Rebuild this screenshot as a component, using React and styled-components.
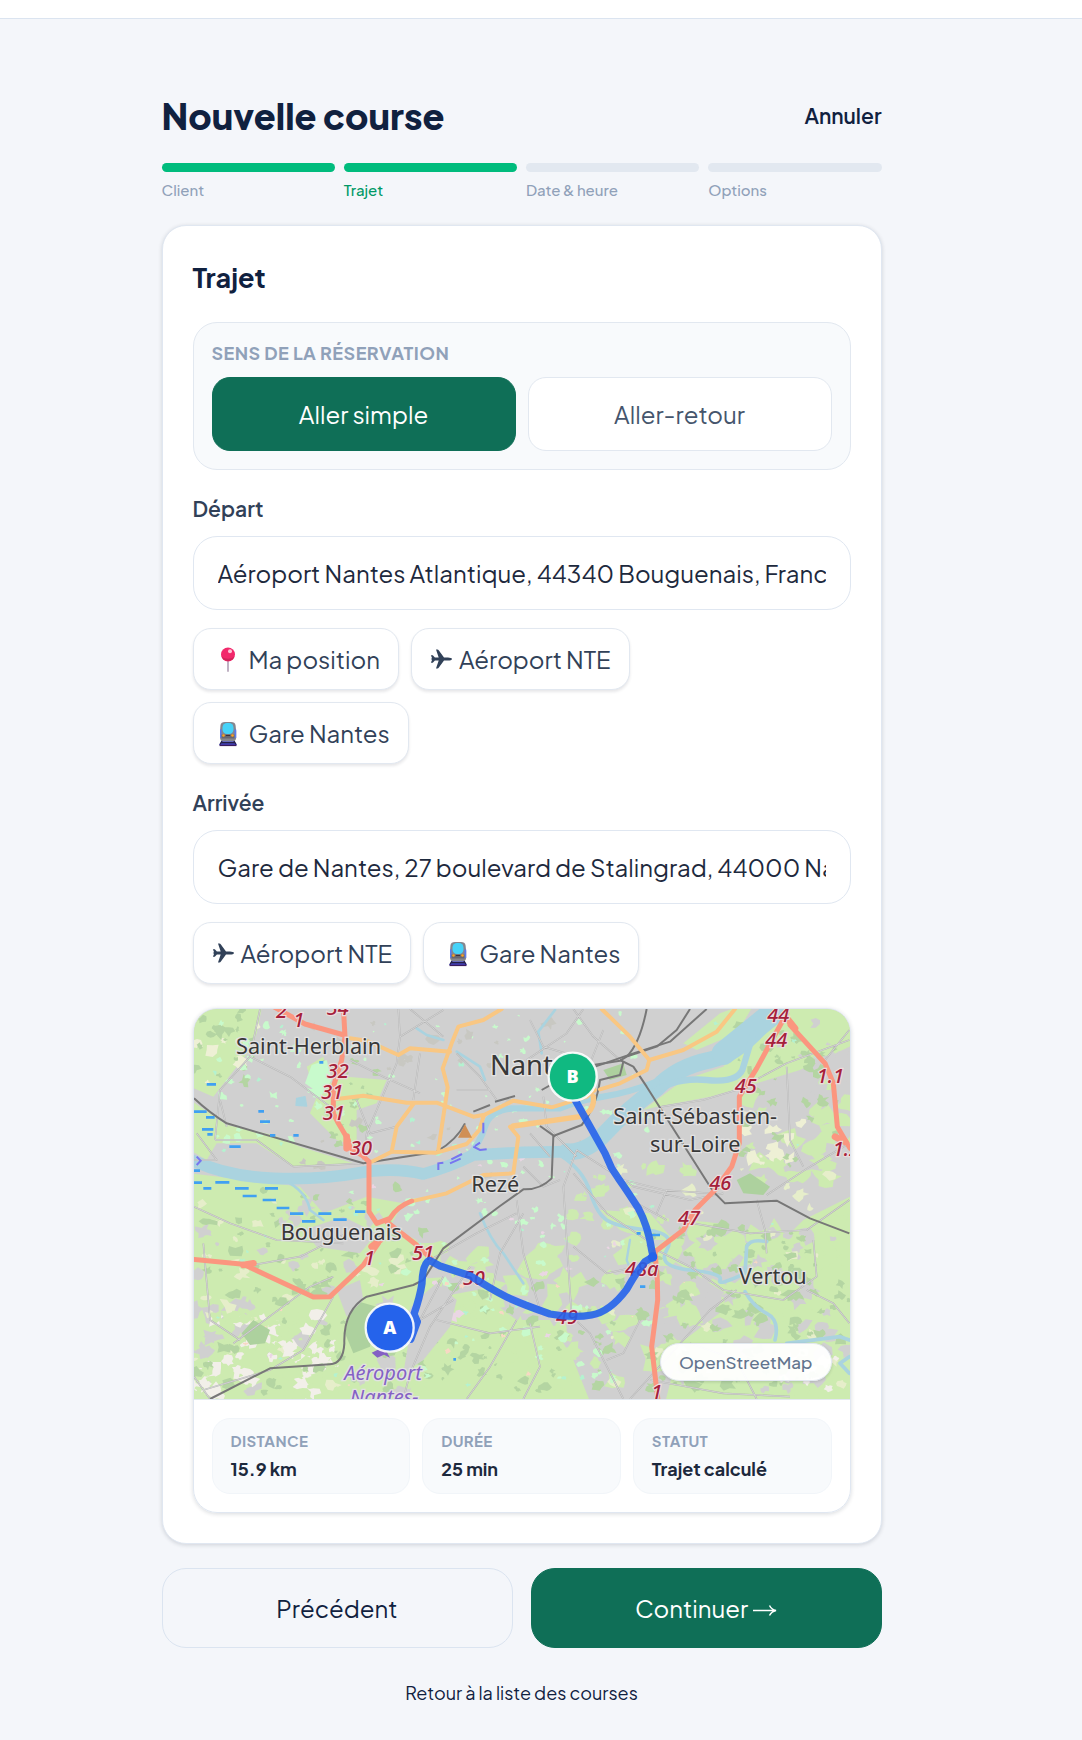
import { useState } from "react";
import styled, { createGlobalStyle, css } from "styled-components";

const steps = [
  { label: "Client", done: true },
  { label: "Trajet", done: true, current: true },
  { label: "Date & heure" },
  { label: "Options" },
];

const stats = [
  { label: "Distance", value: "15.9 km" },
  { label: "Durée", value: "25 min" },
  { label: "Statut", value: "Trajet calculé" },
];

const App = () => {
  const [sens, setSens] = useState("simple");
  const [depart, setDepart] = useState(
    "Aéroport Nantes Atlantique, 44340 Bouguenais, France"
  );
  const [arrivee, setArrivee] = useState(
    "Gare de Nantes, 27 boulevard de Stalingrad, 44000 Nantes, France"
  );

  return (
    <>
      <GlobalStyle />
      <TopBar />
      <Page>
        <Container>
          <TitleRow>
            <Title>Nouvelle course</Title>
            <CancelLink href="#annuler">Annuler</CancelLink>
          </TitleRow>

          <Steps>
            {steps.map(s => (
              <Step key={s.label} $done={s.done} $current={s.current}>
                {s.label}
              </Step>
            ))}
          </Steps>

          <Card>
            <CardTitle>Trajet</CardTitle>

            <SensBox role="group" aria-labelledby="sens">
              <SensLabel id="sens">Sens de la réservation</SensLabel>
              <SensGrid>
                <SensButton
                  type="button"
                  $active={sens === "simple"}
                  onClick={() => setSens("simple")}
                >
                  Aller simple
                </SensButton>
                <SensButton
                  type="button"
                  $active={sens === "retour"}
                  onClick={() => setSens("retour")}
                >
                  Aller-retour
                </SensButton>
              </SensGrid>
            </SensBox>

            <Field>
              <Label htmlFor="depart">Départ</Label>
              <Input
                id="depart"
                value={depart}
                onChange={e => setDepart(e.target.value)}
              />
              <Chips>
                <Chip type="button">
                  <PinIcon />
                  Ma position
                </Chip>
                <Chip type="button">
                  <PlaneIcon />
                  Aéroport NTE
                </Chip>
                <Chip type="button">
                  <TrainIcon />
                  Gare Nantes
                </Chip>
              </Chips>
            </Field>

            <Field>
              <Label htmlFor="arrivee">Arrivée</Label>
              <Input
                id="arrivee"
                value={arrivee}
                onChange={e => setArrivee(e.target.value)}
              />
              <Chips>
                <Chip type="button">
                  <PlaneIcon />
                  Aéroport NTE
                </Chip>
                <Chip type="button">
                  <TrainIcon />
                  Gare Nantes
                </Chip>
              </Chips>
            </Field>

            <MapCard>
              <MapView>
                <RouteMap />
                <MapCredit href="#osm">OpenStreetMap</MapCredit>
              </MapView>
              <Stats>
                {stats.map(s => (
                  <Stat key={s.label}>
                    <dt>{s.label}</dt>
                    <dd>{s.value}</dd>
                  </Stat>
                ))}
              </Stats>
            </MapCard>
          </Card>

          <Actions>
            <ActionButton type="button">Précédent</ActionButton>
            <ActionButton type="button" $primary>
              Continuer <Arrow />
            </ActionButton>
          </Actions>
          <BackLink href="#courses">Retour à la liste des courses</BackLink>
        </Container>
      </Page>
    </>
  );
};

export default App;

const PinIcon = () => (
  <ChipIcon viewBox="0 0 32 28" aria-hidden="true">
    <path d="M16 14v12" stroke="#b9a9bd" strokeWidth="1.8" strokeLinecap="round" />
    <circle cx="16" cy="9.500" r="7" fill="#f2286b" />
    <path d="M9.500 11.500a7 7 0 0 0 13 0c-4 3-9 3-13 0z" fill="#cf2459" />
    <circle cx="18" cy="6.300" r="2" fill="#ffc2d6" />
  </ChipIcon>
);

const TrainIcon = () => (
  <ChipIcon viewBox="0 -1 32 28" aria-hidden="true">
    <path d="M10 20.500h12l3 4.500H7z" fill="#4a55f0" />
    <path d="M8.500 5Q9 2 13 2h6q4 0 4.500 3l.7 6v7q0 2-2.500 3.500H10.300Q8 20 8 18v-7z" fill="#85868e" />
    <path d="M8 9.500h1.500v8L8 18zM22.500 9.500h1.700v8.500l-1.700-.5z" fill="#5b7df0" />
    <rect x="10.500" y="3" width="11" height="11" rx="4.500" fill="#45d3f8" />
    <path d="M9.500 14.500h13v4h-13z" fill="#68666e" />
    <circle cx="11.500" cy="15.500" r="1.300" fill="#ffa41b" />
    <circle cx="20.500" cy="15.500" r="1.300" fill="#ffa41b" />
    <path d="M14 15.500h4" stroke="#3a3440" />
    <path d="M10 21l-2 3.500M22 21l2 3.500M9 22.700h14" stroke="#262046" strokeWidth="1.400" />
    <path d="M7.500 25.300h17" stroke="#3a1c5c" strokeWidth="1.600" />
  </ChipIcon>
);

const PlaneIcon = () => (
  <PlaneSvg viewBox="0 0 22 20" aria-hidden="true">
    <path
      d="M21.500 10Q21 11.500 17.500 11.500H13.500L8.400 18.600Q7.800 19.500 6.800 19.500H5.500L8.200 11.500H4.400L2.300 13.800H.4L1.600 10.800 .2 10 1.600 9.200 .4 6.200H2.300L4.400 8.500H8.200L5.500 .5H6.800Q7.800 .5 8.400 1.400L13.500 8.500H17.500Q21 8.500 21.500 10Z"
      fill="currentColor"
    />
  </PlaneSvg>
);

const Arrow = () => (
  <ArrowIcon viewBox="0 0 24 14" aria-hidden="true">
    <path d="M0 7.500h22M16.500 2.500Q18.500 6.500 23 7.500 18.500 8.500 16.500 12.500" fill="none" stroke="currentColor" strokeWidth="1.500" />
  </ArrowIcon>
);

/* small land-use patches, spread with a seeded generator */
const patches = (seed, count, [x, y, w, h], size) => {
  let n = seed * 7919;
  const rnd = () => {
    n = (n * 16807) % 2147483647;
    return n / 2147483647;
  };
  let d = "";
  for (let i = 0; i < count; i++) {
    const cx = x + rnd() * w;
    const cy = y + rnd() * h;
    const sides = 8 + Math.floor(rnd() * 6);
    const r = size * (0.3 + rnd());
    for (let k = 0; k < sides; k++) {
      const a = (k / sides) * Math.PI * 2;
      const rr = r * (0.35 + rnd() * 0.85);
      d += `${k ? "L" : "M"}${Math.round(cx + Math.cos(a) * rr * 1.2)} ${Math.round(cy + Math.sin(a) * rr)}`;
    }
    d += "Z";
  }
  return d;
};

const land = [
  ["#cdebb0", patches(11, 80, [560, 740, 760, 460], 38)],
  ["#cdebb0", patches(12, 80, [1400, 660, 580, 540], 42)],
  ["#cdebb0", patches(13, 20, [1680, 250, 300, 330], 30)],
  ["#cdebb0", patches(31, 26, [1120, 480, 400, 300], 22)],
  ["#d0d0d0", patches(14, 44, [12, 620, 620, 560], 26)],
  ["#d0d0d0", patches(32, 40, [1420, 700, 560, 480], 28)],
  ["#d0d0d0", patches(15, 10, [1720, 60, 260, 220], 22)],
  ["#e6eeca", patches(16, 36, [12, 600, 620, 560], 18)],
  ["#eef0d5", patches(33, 8, [12, 40, 200, 240], 18)],
  ["#e6eeca", patches(17, 30, [1250, 500, 720, 680], 17)],
  ["#eef0d5", patches(34, 12, [1660, 340, 180, 180], 22)],
  ["#f2efe9", patches(18, 40, [12, 940, 440, 250], 22)],
  ["#f2efe9", patches(35, 10, [1740, 1020, 230, 170], 18)],
  ["#cdebb0", patches(36, 60, [12, 940, 460, 250], 18)],
  ["#b4d5a2", patches(19, 90, [12, 560, 700, 630], 17)],
  ["#b4d5a2", patches(20, 100, [1380, 680, 600, 510], 18)],
  ["#b4d5a2", patches(21, 50, [700, 820, 660, 370], 16)],
  ["#b4d5a2", patches(22, 36, [1640, 60, 330, 440], 15)],
  ["#b4d5a2", patches(23, 20, [12, 30, 180, 220], 17)],
  ["#b4d5a2", patches(37, 16, [400, 180, 160, 260], 11)],
  ["#c8facc", patches(24, 80, [480, 40, 900, 640], 9)],
  ["#c8facc", patches(25, 50, [640, 600, 760, 560], 13)],
  ["#c8facc", patches(26, 30, [60, 60, 400, 360], 12)],
  ["#b4f2d0", patches(38, 50, [12, 60, 1900, 1100], 7)],
  ["#ead6e4", patches(28, 16, [40, 380, 1300, 700], 14)],
  ["#f8d8c4", patches(39, 20, [60, 740, 1700, 420], 7)],
  ["#c8c8c2", patches(29, 24, [250, 60, 1100, 500], 16)],
];

const minorRoads =
  "M210 27L180 170 90 270 75 420M180 170L240 200 300 230 420 320M75 420L200 420 310 500 520 490M110 380L90 300" +
  "M625 27L630 110 620 190 560 330 530 400 520 480M660 27L760 110M480 180L580 230 690 280M630 110L760 30" +
  "M800 160L870 230 920 300M500 300L540 400 620 380M690 160L670 300M800 270H900M12 480L80 480 20 400" +
  "M1020 60L1060 140 1160 170M1150 27L1210 110 1290 180M1010 180L1130 100 1180 27M1240 90L1180 240" +
  "M1060 290L1070 380 1160 470M1160 450L1300 540 1420 570 1560 580M1160 450L1120 560 1130 720 1145 950" +
  "M1240 500L1330 560 1500 600 1600 580M1150 520L1250 640 1370 720M1430 570L1400 640M1020 400L1080 470" +
  "M1415 320L1540 300 1640 270 1790 190 1978 120M1905 180L1978 90M1790 200L1800 420 1840 500M1730 585L1860 500 1978 430" +
  "M1510 670L1680 700 1850 690 1978 600M1700 600L1725 690 1730 760M1370 735L1500 800 1600 870 1780 900 1880 830 1870 720" +
  "M1640 870L1560 930 1480 1020 1320 1197M1850 870L1930 910 1978 970M1145 950L1200 1000 1300 1197" +
  "M1000 500L1060 560 1110 540M1000 640L930 760 900 900M840 800L720 980 660 1120 640 1197M980 600L1000 760 1050 930" +
  "M760 830L690 960 790 900M740 960L900 1000 1050 980M720 780L860 700 980 640M1150 740L1250 820 1390 790" +
  "M12 620L120 670 260 720 460 730M40 730L60 960 150 1020M160 800L330 770 470 700M130 1030L360 860 430 830" +
  "M430 890L340 1050 240 1110 40 1170M12 1130L60 1197M980 960L900 1100 830 1197M1020 970L1050 1100 1000 1197" +
  "M1350 960L1300 1060 1250 1080M1380 1140L1600 1180 1800 1190M1500 1030L1640 1080 1700 1197M1340 610L1430 660";

const towns = [
  ["Saint-Herblain", 138, 161, 65],
  ["Nantes", 900, 226, 82],
  ["Rezé", 844, 576, 65],
  ["Saint-Sébastien-", 1270, 371, 65],
  ["sur-Loire", 1380, 455, 65],
  ["Bouguenais", 272, 719, 65],
  ["Vertou", 1646, 851, 65],
];

const exits = [
  ["2", 258, 54],
  ["1", 310, 80],
  ["34", 410, 46],
  ["32", 410, 233],
  ["31", 394, 298],
  ["31", 398, 361],
  ["30", 480, 465],
  ["1", 522, 795],
  ["51", 666, 781],
  ["50", 818, 854],
  ["49", 1098, 972],
  ["48a", 1305, 827],
  ["47", 1464, 675],
  ["46", 1558, 569],
  ["45", 1634, 280],
  ["44", 1726, 141],
  ["44", 1732, 67],
  ["1.1", 1880, 248],
  ["1.2", 1928, 467],
  ["1", 1384, 1197],
];

const RouteMap = () => (
  <MapSvg
    viewBox="12 27 1968 1170"
    preserveAspectRatio="xMidYMid slice"
    role="img"
    aria-label="Itinéraire de l'aéroport à la gare de Nantes"
  >
    <defs>
      <filter id="soft" x="0" y="0" width="1" height="1">
        <feGaussianBlur stdDeviation="2" />
      </filter>
    </defs>
    <rect width="2000" height="1200" fill="#d0d0d0" />
    <g filter="url(#soft)">
      <rect width="2000" height="1230" fill="#d0d0d0" />
      <g fill="#cdebb0">
        <path d="M0 0H220L200 100 180 150 140 200 70 290 0 260Z" />
        <path d="M0 300L110 375 250 405 330 440 490 490 310 500 200 430 80 430 50 480 0 450Z" />
        <path d="M0 520L250 550 330 560 400 640 530 590 640 610 600 680 680 720 720 790 690 880 640 960 560 1080 640 1230H0Z" />
        <path d="M350 200L400 170 420 250 470 230 590 240 560 310 500 330 500 440 440 420 360 340 380 290Z" />
        <path d="M1360 330L1480 240 1600 200 1690 90 1740 0H2000V130L1830 210 1700 250 1560 290 1400 320Z" />
        <path d="M1480 130L1590 40 1700 0 1640 100 1520 150Z" />
        <path d="M1430 770L1620 860 1700 800 1840 660 2000 580V1230H1420L1470 1030 1640 900Z" />
        <path d="M700 900L860 870 980 960 1080 960 1150 1080 1210 1230H640L700 1060Z" />
        <path d="M1230 630L1380 640 1450 720 1380 720 1290 690Z" />
      </g>
      {land.map(([fill, d], i) => (
        <path key={i} d={d} fill={fill} />
      ))}
      <g fill="#add19e">
        <path d="M490 900L560 920 540 1040 490 1060 465 1000Z" />
        <path d="M155 1000L190 960 240 990 225 1030 180 1035Z" />
        <path d="M1640 540L1680 520 1740 560 1720 585 1660 580Z" />
        <path d="M1240 210L1300 190 1310 225 1260 240Z" />
      </g>
      <path d="M365 195L410 180 425 240 395 285 345 250Z" fill="#c8facc" />
      <g fill="#d0d0d0">
        <path d="M440 870L510 840 520 900 470 950Z" />
        <path d="M680 900L740 850 800 900 780 980 700 1080 640 1120 660 1000Z" />
        <path d="M340 690L460 650 560 700 510 760 380 740Z" />
      </g>

      <g fill="none" stroke="#aad3df" strokeLinecap="round" strokeLinejoin="round">
        <path d="M0 478Q110 530 250 535T500 520 700 522Q780 500 850 465L1000 457 1150 455" strokeWidth="35" />
        <path d="M1130 455Q1190 460 1250 395T1400 265Q1460 200 1560 180T1760 20" strokeWidth="50" />
        <path d="M1600 160L1760 30" strokeWidth="70" />
        <path d="M830 475Q870 430 885 380T970 325L1110 325Q1170 300 1240 290T1400 245" strokeWidth="19" />
        <path d="M1380 285Q1450 230 1550 240T1660 200L1690 100" strokeWidth="19" />
        <path d="M1110 465Q1180 510 1200 575T1250 660 1370 690 1430 750 1500 810 1590 840 1665 820L1670 740Q1680 715 1730 725" strokeWidth="11" />
        <path d="M1665 875Q1690 920 1730 940T1755 1020M1790 1030L1950 1010 1978 1020M1978 1070L1950 1090 1978 1120" strokeWidth="11" />
        <path d="M680 85L710 105 760 120M800 155L870 200 885 240M1095 30L1045 95 1055 160M300 550Q350 580 360 630L400 660M870 640Q900 720 940 760L1000 850" strokeWidth="8" />
        <path d="M1320 720L1310 780 1330 830" strokeWidth="7" />
        <path d="M320 295L345 290 350 318 318 316Z" fill="#aad3df" strokeWidth="4" />
      </g>

      <path d={minorRoads} fill="none" stroke="#b2b2b2" strokeWidth="5" strokeLinejoin="round" />
      <path d={minorRoads} fill="none" stroke="#e2e2e2" strokeWidth="2" strokeLinejoin="round" />

      <g fill="none" stroke="#777" strokeWidth="6" strokeLinejoin="round">
        <path d="M12 295Q60 340 110 370L520 490 740 455Q800 420 825 370" />
        <path d="M850 335L900 315M915 305L975 288M1055 270L1100 245M1200 205L1330 160 1440 125 1550 27" />
        <path d="M1210 195L1290 182 1310 170 1400 140 1460 90 1500 27M1310 170Q1350 130 1370 27" />
        <path d="M1290 180L1330 200 1370 260 1570 575 1605 610 1760 602 1860 655 1978 700" />
        <path d="M1300 185L1290 225 1230 240Q1220 320 1175 375L1090 408 1085 535Q1050 570 1000 568L930 618 760 745 700 840 670 855 530 890Q460 930 463 1030 460 1090 420 1093L240 1105 60 1197" />
        <path d="M1050 378L1095 410" />
      </g>

      <g fill="none" stroke="#f9c783" strokeWidth="12" strokeLinecap="round" strokeLinejoin="round">
        <path d="M480 115L530 122 625 165 660 145 780 155M935 27L880 60 805 80 785 130 758 205 773 262 745 450" />
        <path d="M440 297L520 287 650 308 740 308 850 350 880 345M670 312L620 380 605 455 740 458 830 432 868 390 882 345 970 302 1085 322 1190 290 1215 270" />
        <path d="M545 485L605 455M960 380L985 410 970 520 880 525 770 580 660 605" />
        <path d="M1210 290Q1215 335 1170 350L970 378" strokeWidth="16" />
        <path d="M1230 268L1290 250 1370 210 1378 180 1320 110 1235 27M1378 180L1480 150 1580 95 1635 27" />
      </g>
      <g fill="none" stroke="#fb967f" strokeWidth="15" strokeLinecap="round" strokeLinejoin="round">
        <path d="M250 20L345 72 462 105M460 20L465 110 455 180 430 260 430 340 445 370 475 420 480 445 515 465 537 485V635L560 670 600 655Q620 620 665 603" />
        <path d="M0 777L160 793 370 891 420 890 520 795 565 730M590 665L680 735 722 775" />
        <path d="M1790 40L1700 205 1648 290 1648 430 1625 500 1575 570 1515 630 1480 690 1395 755 1402 840 1403 900 1385 1040 1405 1210" />
        <path d="M1800 75L1905 190 1930 250 1942 380 1980 445" />
        <path d="M1795 60L1815 85M470 410V445M160 795L190 790M545 740L570 720M1935 410L1965 425" strokeWidth="20" />
      </g>

      <path
        d="M50 253H78M12 335H50M48 352H74M205 334H222M210 365H240M36 388H70M240 406H256M310 406H326M118 440H152M52 403H68M388 187H400M12 512H30M12 548H36M76 547H118M40 565H64M135 565H176M158 588H200M225 565H264M218 600H258M260 624H298M300 641H340M385 641H424M430 659H470M495 635H526M336 664H376M1385 705H1410M1340 700H1352M1350 860H1366M790 1078H798"
        stroke="#3fa0f2"
        strokeWidth="8"
      />
      <path
        d="M745 510V490L760 488M780 490L812 476M784 478L816 462M850 440L870 450 890 448M855 438L870 428M880 400V368M20 470L32 482 20 495"
        fill="none"
        stroke="#7774f0"
        strokeWidth="6"
      />
      <path d="M804 413L825 373 846 413Z" fill="#d08f55" />
      <path d="M545 1058L582 1040 600 1073 582 1064 562 1073Z" fill="#8461c4" />
    </g>

    <Place>
      {towns.map(([name, x, y, size]) => (
        <text key={name} x={x} y={y} fontSize={size}>
          {name}
        </text>
      ))}
    </Place>
    <Exit>
      {exits.map(([name, x, y]) => (
        <text key={x + name} x={x} y={y}>
          {name}
        </text>
      ))}
    </Exit>
    <Airport>
      <text x="463" y="1141">Aéroport</text>
      <text x="480" y="1211">Nantes-</text>
    </Airport>

    <path
      d="M662 1018L682 965 672 942Q690 890 696 850 698 790 718 781L750 798 840 827Q900 865 940 886T1080 942Q1150 955 1205 945T1310 868Q1340 815 1365 785L1390 770 1386 755Q1375 680 1345 625 1310 570 1285 535L1265 505 1245 460 1147 285"
      fill="none"
      stroke="#2563eb"
      strokeOpacity="0.9"
      strokeWidth="22"
      strokeLinecap="round"
      strokeLinejoin="round"
    />
    <circle cx="1388" cy="771" r="14" fill="#2563eb" />
    <Marker>
      <circle cx="599" cy="983" r="72" fill="#2563eb" />
      <text x="599" y="1003">A</text>
      <circle cx="1148" cy="230" r="72" fill="#10b981" />
      <text x="1148" y="250">B</text>
    </Marker>
  </MapSvg>
);

const GlobalStyle = createGlobalStyle`
  * {
    box-sizing: border-box;
  }
  body {
    margin: 0;
    background: #f4f6fa;
    color: #10213f;
    font-family: "Plus Jakarta Sans", Inter, sans-serif;
  }
  button, input {
    font: inherit;
  }
  a {
    color: inherit;
    text-decoration: none;
  }
`;

const TopBar = styled.header`
  height: 19px;
  background: #fff;
  border-bottom: 1px solid #dbe4f0;
`;

const Page = styled.main`
  padding: 74px 39px 30px 0;
`;

const Container = styled.div`
  max-width: 720px;
  margin: 0 auto;
`;

const TitleRow = styled.div`
  display: flex;
  align-items: center;
  justify-content: space-between;
  height: 44px;
`;

const Title = styled.h1`
  margin: 0;
  font-size: 36px;
  font-weight: 800;
`;

const CancelLink = styled.a`
  font-size: 21px;
  font-weight: 600;
`;

const Steps = styled.ol`
  display: grid;
  grid-template-columns: repeat(4, 1fr);
  gap: 9px;
  margin: 26px 0 24px;
  padding: 0;
  list-style: none;
`;

const Step = styled.li`
  padding-bottom: 1px;
  color: ${({ $current }) => ($current ? "#009966" : "#90a1b9")};
  font-size: 15px;
  font-weight: 500;
  line-height: 20px;

  &::before {
    content: "";
    display: block;
    height: 9px;
    margin-bottom: 8px;
    border-radius: 5px;
    background: ${({ $done }) => ($done ? "#00bc7d" : "#e2e8f0")};
  }
`;

const Card = styled.section`
  padding: 30px;
  border: 1px solid #e0e7f1;
  border-radius: 24px;
  background: #fff;
  box-shadow: 0 1px 4px rgba(15, 23, 42, 0.16);
`;

const CardTitle = styled.h2`
  margin: 3px 0 27px;
  font-size: 27px;
  font-weight: 700;
  line-height: 36px;
`;

const SensBox = styled.div`
  padding: 18px;
  border: 1px solid #e2e8f0;
  border-radius: 24px;
  background: #f8fafc;
`;

const SensLabel = styled.p`
  margin: 0 0 12px;
  color: #90a1b9;
  font-size: 18px;
  font-weight: 700;
  line-height: 24px;
  letter-spacing: 0.025em;
  text-transform: uppercase;
`;

const SensGrid = styled.div`
  display: grid;
  grid-template-columns: 1fr 1fr;
  gap: 12px;
`;

const SensButton = styled.button`
  height: 74px;
  border: 1px solid #e2e8f0;
  border-radius: 18px;
  background: #fff;
  color: #45556c;
  font-size: 24px;
  font-weight: 400;

  ${({ $active }) =>
    $active &&
    css`
      border-color: #0f6f57;
      background: #0f6f57;
      color: #fff;
    `}
`;

const Field = styled.div`
  margin-top: 24px;
`;

const Label = styled.label`
  display: block;
  margin-bottom: 12px;
  color: #314158;
  font-size: 21px;
  font-weight: 600;
  line-height: 30px;
`;

const Input = styled.input`
  display: block;
  width: 100%;
  height: 74px;
  padding: 0 24px;
  border: 1px solid #e0e7f1;
  border-radius: 24px;
  background: #fff;
  color: #1d293d;
  font-size: 24px;
  font-weight: 400;
`;

const Chips = styled.div`
  display: flex;
  flex-wrap: wrap;
  gap: 12px;
  max-width: 510px;
  margin-top: 18px;
`;

const Chip = styled.button`
  display: flex;
  align-items: center;
  height: 62px;
  padding: 0 18px;
  border: 1px solid #e2e8f0;
  border-radius: 18px;
  background: #fff;
  box-shadow: 0 2px 3px rgba(15, 23, 42, 0.1);
  color: #314158;
  font-size: 24px;
  font-weight: 400;
`;

const ChipIcon = styled.svg`
  width: 32px;
  height: 28px;
  margin-right: 5px;
`;

const PlaneSvg = styled.svg`
  width: 23px;
  height: 20px;
  margin-right: 6px;
`;

const MapCard = styled.div`
  margin-top: 24px;
  overflow: hidden;
  border: 1px solid #e0e7f1;
  border-radius: 24px;
  box-shadow: 0 1px 4px rgba(15, 23, 42, 0.16);
`;

const MapView = styled.div`
  position: relative;
  border-bottom: 1px solid #e2e8f0;
`;

const MapSvg = styled.svg`
  display: block;
  width: 100%;
  height: 390px;
`;

const Place = styled.g`
  fill: #383838;
  stroke: #e2e2e2;
  stroke-width: 8px;
  paint-order: stroke;
  font-family: "Noto Sans", sans-serif;
  font-weight: 400;
`;

const Exit = styled.g`
  fill: #a5203a;
  stroke: #ecdcdc;
  stroke-width: 7px;
  paint-order: stroke;
  font-family: "Noto Sans", sans-serif;
  font-size: 60px;
  font-style: italic;
  font-weight: 500;
`;

const Airport = styled(Place)`
  fill: #8461c4;
  font-size: 60px;
  font-style: italic;
`;

const Marker = styled.g`
  fill: #fff;
  font-family: "Noto Sans", sans-serif;
  font-size: 54px;
  font-weight: 900;
  text-anchor: middle;

  circle {
    stroke: #fff;
    stroke-opacity: 0.9;
    stroke-width: 7px;
  }
`;

const MapCredit = styled.a`
  position: absolute;
  right: 18px;
  bottom: 18px;
  padding: 6px 18px;
  border: 1px solid #e2e8f0;
  border-radius: 20px;
  background: rgba(255, 255, 255, 0.95);
  box-shadow: 0 1px 3px rgba(15, 23, 42, 0.16);
  color: #62748e;
  font-size: 17px;
  font-weight: 500;
  line-height: 24px;
`;

const Stats = styled.dl`
  display: grid;
  grid-template-columns: repeat(3, 1fr);
  gap: 12px;
  margin: 0;
  padding: 18px;
`;

const Stat = styled.div`
  padding: 8px 18px 10px;
  border: 1px solid #f1f5f9;
  border-radius: 18px;
  background: #f8fafc;

  dt {
    color: #90a1b9;
    font-size: 15px;
    font-weight: 700;
    line-height: 28px;
    letter-spacing: 0.025em;
    text-transform: uppercase;
  }

  dd {
    margin: 0;
    color: #1d293d;
    font-size: 18px;
    font-weight: 700;
    line-height: 28px;
  }
`;

const Actions = styled.div`
  display: grid;
  grid-template-columns: 1fr 1fr;
  gap: 18px;
  margin-top: 24px;
`;

const ActionButton = styled.button`
  display: flex;
  align-items: center;
  justify-content: center;
  gap: 5px;
  height: 80px;
  border: 1px solid ${({ $primary }) => ($primary ? "#0f6f57" : "#dbe4f0")};
  border-radius: 24px;
  background: ${({ $primary }) => ($primary ? "#0f6f57" : "transparent")};
  color: ${({ $primary }) => ($primary ? "#fff" : "#10213f")};
  font-size: 24px;
  font-weight: 400;
`;

const ArrowIcon = styled.svg`
  width: 24px;
  height: 14px;
  margin-top: 4px;
`;

const BackLink = styled.a`
  display: block;
  width: fit-content;
  margin: 32px auto 0;
  font-size: 18px;
  font-weight: 400;
  line-height: 26px;
`;
